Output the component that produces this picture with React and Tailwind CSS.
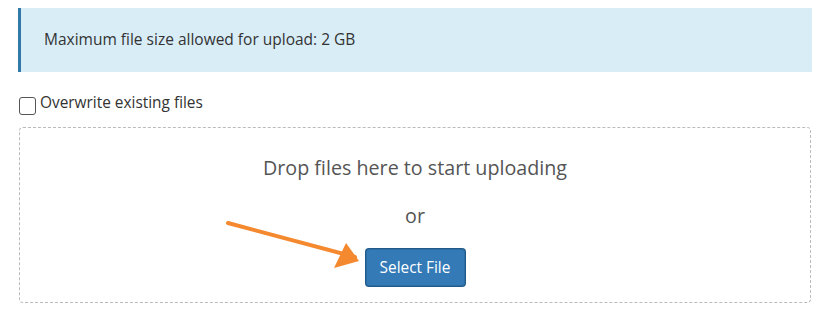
import React from 'react';

const App = () => {
  return (
    <div className="w-[837px] h-[310px] bg-white pl-[18px] pr-[25px] pt-[8px] font-['Open_Sans',sans-serif] text-[#333]">
      {/* Info alert */}
      <div className="h-[64px] bg-[#d9edf7] border-l-[3px] border-[#2f7aa9] flex items-center pl-[23px] text-[15.5px]">
        Maximum file size allowed for upload: 2 GB
      </div>

      {/* Overwrite option */}
      <label className="flex items-start mt-[24px] ml-px h-[24px] text-[15.4px]">
        <span className="mt-[1px] w-[17px] h-[18px] border border-[#555] rounded-[3px] bg-white"></span>
        <span className="ml-[4px] leading-[14px]">Overwrite existing files</span>
      </label>

      {/* Drop zone */}
      <div className="relative mt-[7px] ml-px w-[792px] h-[176px] border border-dashed border-[#bbb] rounded-[4px] flex flex-col items-center">
        <p className="mt-[26px] text-[19.7px] leading-[28px] text-[#555]">Drop files here to start uploading</p>
        <p className="mt-[20px] text-[19.7px] leading-[28px] text-[#555]">or</p>
        <button className="mt-[19px] w-[99px] h-[37px] bg-[#337ab7] border border-[#2e6da4] rounded-[3px] text-white text-[15.4px] shadow-[0_0_0_1px_#1f5a8a]">
          Select File
        </button>

        {/* Arrow annotation */}
        <svg className="absolute left-[200px] top-[85px] w-[165px] h-[60px]" viewBox="0 0 165 60" fill="none">
          <line x1="8" y1="10" x2="135" y2="44" stroke="#f5892f" strokeWidth="4" strokeLinecap="round" />
          <polygon points="139,48 126,30 114,55" fill="#f5892f" />
        </svg>
      </div>
    </div>
  );
};

export default App;
